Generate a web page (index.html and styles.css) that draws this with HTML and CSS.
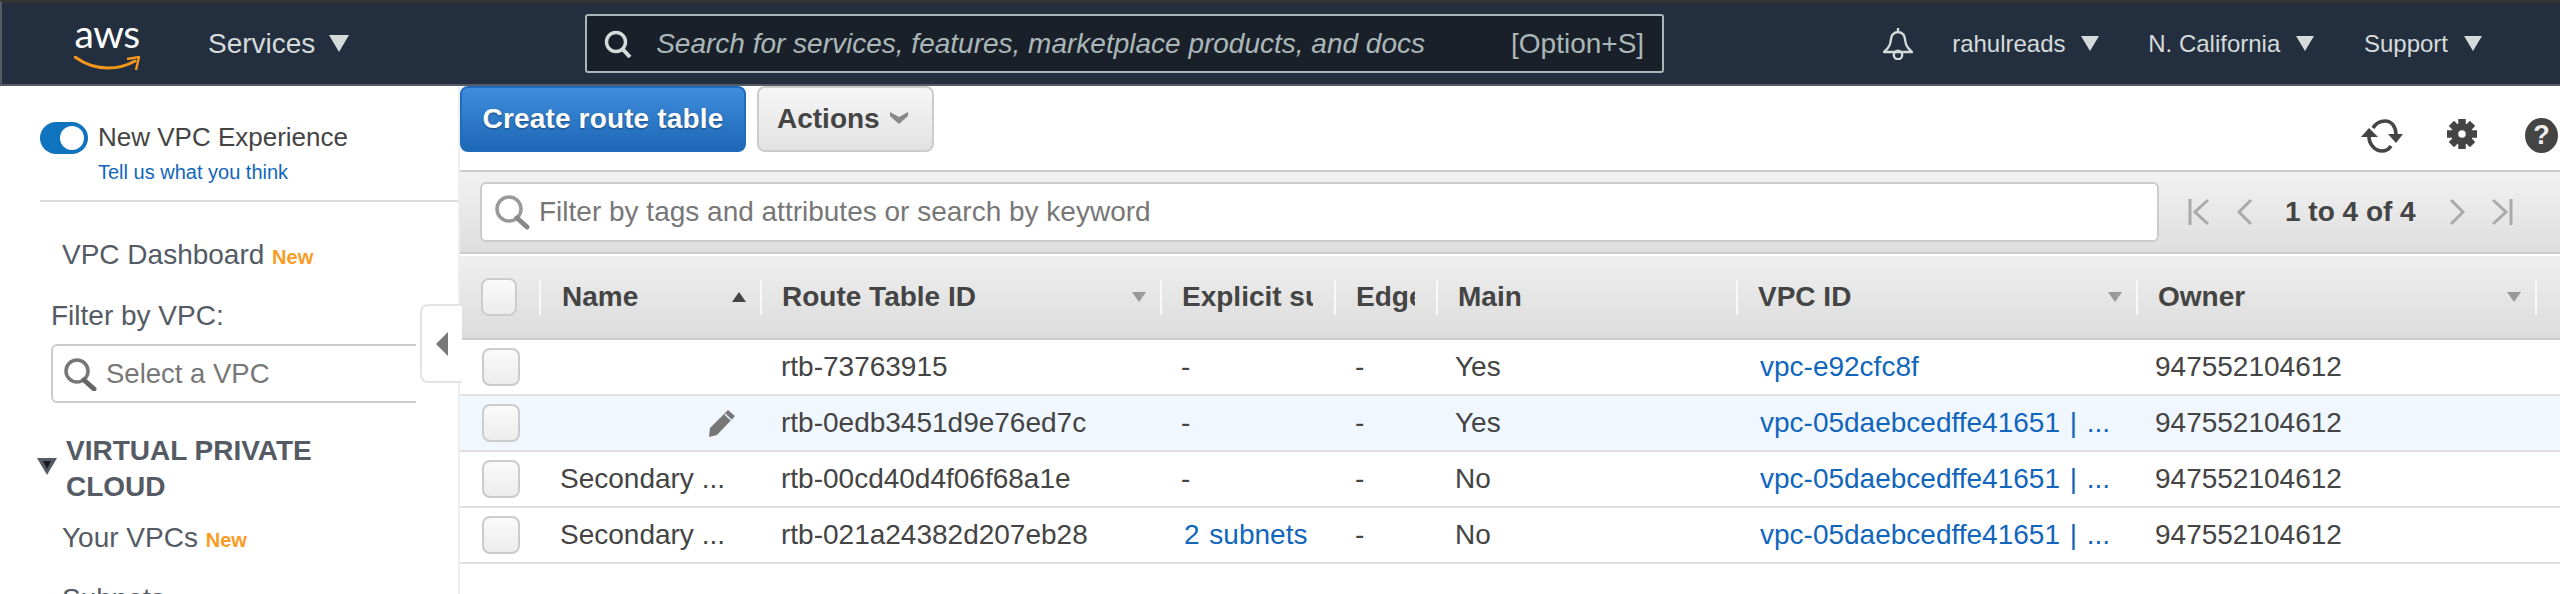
FILE: index.html
```html
<!DOCTYPE html>
<html lang="en">
<head>
    <meta charset="UTF-8">
    <title>Route Tables - VPC Console</title>
    <link rel="stylesheet" href="styles.css">
</head>
<body>
    <header class="navbar">
        <div class="logo">
            <span class="logo-text">aws</span>
            <svg class="logo-smile" viewBox="0 0 66 15" width="66" height="15">
                <path d="M1 1C12 9 24 12 34 12C44 12 54 9 61 5" fill="none" stroke="#f7981d" stroke-width="3" stroke-linecap="round"/>
                <path d="M53 3L65 1L62 14" fill="none" stroke="#f7981d" stroke-width="2.4"/>
            </svg>
        </div>
        <div class="nav-item services">Services <span class="caret"></span></div>
        <div class="nav-search">
            <svg class="nav-search-icon" viewBox="0 0 28 28" width="28" height="28">
                <circle cx="12" cy="12" r="9.5" fill="none" stroke="#d5dbdb" stroke-width="3.4"/>
                <path d="M18.5 19L26 27" stroke="#d5dbdb" stroke-width="4"/>
            </svg>
            <span class="nav-search-text">Search for services, features, marketplace products, and docs</span>
            <span class="nav-search-key">[Option+S]</span>
        </div>
        <div class="nav-right">
            <svg class="bell" viewBox="0 0 32 33" width="32" height="33">
                <path d="M16 1V5M16 5C10 5 9 10 8.500 15C8 20 5 22 2 25H30C27 22 24 20 23.500 15C23 10 22 5 16 5Z" fill="none" stroke="#d5dbdb" stroke-width="2.400" stroke-linejoin="round"/>
                <circle cx="16" cy="28" r="4.200" fill="none" stroke="#d5dbdb" stroke-width="2.400"/>
            </svg>
            <div class="nav-item small user">rahulreads <span class="caret"></span></div>
            <div class="nav-item small region">N. California <span class="caret"></span></div>
            <div class="nav-item small">Support <span class="caret"></span></div>
        </div>
    </header>

    <div class="layout">
        <aside class="sidebar">
            <div class="experience">
                <span class="toggle"></span>
                <div>
                    <div class="experience-title">New VPC Experience</div>
                    <a class="experience-link">Tell us what you think</a>
                </div>
            </div>
            <div class="side-link dashboard">VPC Dashboard <span class="new">New</span></div>
            <div class="filter-label">Filter by VPC:</div>
            <div class="vpc-select">
                <svg viewBox="0 0 34 34" width="34" height="34">
                    <circle cx="14" cy="14" r="11" fill="none" stroke="#777" stroke-width="3.500"/>
                    <path d="M21 23L31 32" stroke="#666" stroke-width="5" stroke-linecap="round"/>
                </svg>
                <span>Select a VPC</span>
            </div>
            <div class="side-group">
                <svg class="group-arrow" viewBox="0 0 20 17" width="20" height="17">
                    <path d="M0 0H20L10 17Z" fill="#545b64"/>
                    <path d="M6 3H14L10 11Z" fill="#16191f"/>
                </svg>
                <span>VIRTUAL PRIVATE<br>CLOUD</span>
            </div>
            <div class="side-link vpcs">Your VPCs <span class="new">New</span></div>
            <div class="side-link subnets">Subnets</div>
        </aside>

        <div class="collapse-handle"><span></span></div>

        <main class="main">
            <div class="toolbar">
                <button class="btn-create">Create route table</button>
                <button class="btn-actions">Actions
                    <svg viewBox="0 0 20 14" width="20" height="14">
                        <path d="M1 1L10 6L19 1V5L10 13L1 5Z" fill="#888"/>
                    </svg>
                </button>
                <div class="tools">
                    <svg class="tool-refresh" viewBox="0 0 42 34" width="42" height="34">
                        <path d="M12 9C15 4 20 2 24 2C31 2 35 8 35 16" fill="none" stroke="#444" stroke-width="3.600"/>
                        <path d="M27 15H42L35 24Z" fill="#444"/>
                        <path d="M8 18C8 25 14 32 21 32C25 32 28 30 30 27" fill="none" stroke="#444" stroke-width="3.600"/>
                        <path d="M0 18H17L8 9Z" fill="#444"/>
                    </svg>
                    <svg class="tool-gear" viewBox="-16 -16 32 32" width="30" height="32">
                        <g fill="#444">
                            <rect x="-4" y="-16" width="8" height="32"/>
                            <rect x="-4" y="-16" width="8" height="32" transform="rotate(45)"/>
                            <rect x="-4" y="-16" width="8" height="32" transform="rotate(90)"/>
                            <rect x="-4" y="-16" width="8" height="32" transform="rotate(135)"/>
                            <circle r="11.500"/>
                        </g>
                        <circle r="4" fill="white"/>
                    </svg>
                    <span class="tool-help">?</span>
                </div>
            </div>

            <div class="filter-bar">
                <div class="filter-input">
                    <svg viewBox="0 0 36 36" width="36" height="36">
                        <circle cx="15" cy="15" r="12" fill="none" stroke="#999" stroke-width="3.500"/>
                        <path d="M23 24L33 33" stroke="#888" stroke-width="5" stroke-linecap="round"/>
                    </svg>
                    <span>Filter by tags and attributes or search by keyword</span>
                </div>
                <div class="pager">
                    <svg class="pg-first" viewBox="0 0 22 28" width="22" height="28">
                        <path d="M2 1V27M20 2L7 14L20 26" fill="none" stroke="#aaa" stroke-width="3"/>
                    </svg>
                    <svg class="pg-prev" viewBox="0 0 17 28" width="17" height="28">
                        <path d="M15 2L3 14L15 26" fill="none" stroke="#aaa" stroke-width="3"/>
                    </svg>
                    <span class="pg-text">1 to 4 of 4</span>
                    <svg class="pg-next" viewBox="0 0 17 28" width="17" height="28">
                        <path d="M2 2L14 14L2 26" fill="none" stroke="#aaa" stroke-width="3"/>
                    </svg>
                    <svg class="pg-last" viewBox="0 0 22 28" width="22" height="28">
                        <path d="M20 1V27M2 2L15 14L2 26" fill="none" stroke="#aaa" stroke-width="3"/>
                    </svg>
                </div>
            </div>

            <table class="grid">
                <colgroup>
                    <col class="c-check"><col class="c-name"><col class="c-id"><col class="c-explicit"><col class="c-edge"><col class="c-main"><col class="c-vpc"><col class="c-owner"><col>
                </colgroup>
                <thead>
                    <tr>
                        <th><span class="check head-check"></span></th>
                        <th><div class="th name-head"><span class="th-label">Name</span><span class="sort up"></span></div></th>
                        <th><div class="th"><span class="th-label">Route Table ID</span><span class="sort"></span></div></th>
                        <th><div class="th clip"><span class="th-label">Explicit su</span></div></th>
                        <th><div class="th clip"><span class="th-label">Edge</span></div></th>
                        <th><div class="th"><span class="th-label">Main</span></div></th>
                        <th><div class="th"><span class="th-label">VPC ID</span><span class="sort"></span></div></th>
                        <th><div class="th"><span class="th-label">Owner</span><span class="sort"></span></div></th>
                        <th><div class="th"></div></th>
                    </tr>
                </thead>
                <tbody>
                    <tr>
                        <td><span class="check"></span></td>
                        <td></td>
                        <td>rtb-73763915</td>
                        <td>-</td>
                        <td>-</td>
                        <td class="tight">Yes</td>
                        <td><a>vpc-e92cfc8f</a></td>
                        <td class="tight">947552104612</td>
                        <td></td>
                    </tr>
                    <tr class="hover">
                        <td><span class="check"></span></td>
                        <td class="name-edit">
                            <svg viewBox="0 0 28 28" width="28" height="28">
                                <path fill="#777" d="M20 1L27 7L9 26L1 28L2 19Z"/>
                                <path d="M17 5L23 11" stroke="#eef5fd" stroke-width="1.500"/>
                            </svg>
                        </td>
                        <td>rtb-0edb3451d9e76ed7c</td>
                        <td>-</td>
                        <td>-</td>
                        <td class="tight">Yes</td>
                        <td><a>vpc-05daebcedffe41651 | ...</a></td>
                        <td class="tight">947552104612</td>
                        <td></td>
                    </tr>
                    <tr>
                        <td><span class="check"></span></td>
                        <td>Secondary ...</td>
                        <td>rtb-00cd40d4f06f68a1e</td>
                        <td>-</td>
                        <td>-</td>
                        <td class="tight">No</td>
                        <td><a>vpc-05daebcedffe41651 | ...</a></td>
                        <td class="tight">947552104612</td>
                        <td></td>
                    </tr>
                    <tr>
                        <td><span class="check"></span></td>
                        <td>Secondary ...</td>
                        <td>rtb-021a24382d207eb28</td>
                        <td><a>2 subnets</a></td>
                        <td>-</td>
                        <td class="tight">No</td>
                        <td><a>vpc-05daebcedffe41651 | ...</a></td>
                        <td class="tight">947552104612</td>
                        <td></td>
                    </tr>
                </tbody>
            </table>
        </main>
    </div>
</body>
</html>
```

FILE: styles.css
```css
* {
    box-sizing: border-box;
}
html, body {
    margin: 0;
    height: 594px;
    overflow: hidden;
}
body {
    font-family: "Liberation Sans", Arial, sans-serif;
    font-size: 28px;
    color: #444;
    background: white;
}

/* top nav */
.navbar {
    display: flex;
    align-items: center;
    height: 86px;
    background: #232f3e;
    border-top: 3px solid #333;
    border-bottom: 2px solid #545b64;
    border-left: 2px solid #545b64;
    color: #d5dbdb;
}
.logo {
    width: 66px;
    height: 62px;
    margin-left: 72px;
    display: flex;
    flex-direction: column;
    align-items: center;
}
.logo-text {
    font-family: Lato, sans-serif;
    font-size: 39px;
    line-height: 40px;
    height: 43px;
    color: white;
    letter-spacing: -0.5px;
}
.logo-smile {
    display: block;
}
.nav-item {
    display: flex;
    align-items: center;
    white-space: pre;
}
.nav-item.small {
    font-size: 24px;
}
.services {
    margin-left: 68px;
}
.caret {
    width: 0;
    height: 0;
    margin-left: 6px;
    border-left: 10px solid transparent;
    border-right: 10px solid transparent;
    border-top: 17px solid #d5dbdb;
}
.small .caret {
    margin-left: 9px;
    border-left-width: 9px;
    border-right-width: 9px;
    border-top-width: 15px;
}
.nav-search {
    display: flex;
    align-items: center;
    width: 1079px;
    height: 59px;
    margin-left: 236px;
    padding: 0 18px 0 17px;
    background: #1a2029;
    border: 2px solid #aab7b8;
    border-radius: 3px;
}
.nav-search-text {
    margin-left: 24px;
    font-style: italic;
    color: #aab7b8;
}
.nav-search-key {
    margin-left: auto;
    color: #aab7b8;
}
.nav-right {
    display: flex;
    align-items: center;
    margin-left: 218px;
}
.user {
    margin-left: 38px;
}
.region {
    margin-left: 49px;
    margin-right: 50px;
}

/* page */
.layout {
    position: relative;
    display: flex;
    height: 508px;
    overflow: hidden;
}
.sidebar {
    width: 460px;
    flex: none;
    border-right: 2px solid #eee;
    color: #545b64;
}
.experience {
    display: flex;
    align-items: flex-start;
    gap: 10px;
    margin: 32px 0 0 40px;
    height: 84px;
    border-bottom: 2px solid #ddd;
}
.toggle {
    width: 48px;
    height: 32px;
    margin-top: 4px;
    background: #0f74bd;
    border-radius: 16px;
    display: flex;
    justify-content: flex-end;
    align-items: center;
    padding-right: 4px;
}
.toggle::after {
    content: "";
    width: 24px;
    height: 24px;
    background: white;
    border-radius: 50%;
}
.experience-title {
    font-size: 26px;
    line-height: 38px;
    color: #444;
}
.experience-link, a {
    color: #1166bb;
}
.experience-link {
    display: block;
    font-size: 20px;
    line-height: 24px;
    margin-top: 4px;
}
.side-link {
    margin-left: 62px;
    line-height: 32px;
}
.new {
    font-size: 20px;
    font-weight: bold;
    color: #f89c24;
}
.dashboard {
    margin-top: 37px;
}
.filter-label {
    margin: 27px 0 0 51px;
    line-height: 32px;
}
.vpc-select {
    display: flex;
    align-items: center;
    gap: 9px;
    width: 365px;
    height: 59px;
    margin: 12px 0 0 51px;
    padding-left: 10px;
    font-size: 27.5px;
    color: #777;
    border: 2px solid #ccc;
    border-right: none;
    border-radius: 6px 0 0 6px;
}
.side-group {
    display: flex;
    align-items: center;
    gap: 9px;
    margin: 30px 0 0 37px;
    font-weight: bold;
    line-height: 36px;
}
.group-arrow {
    flex: none;
    margin-bottom: 6px;
}
.vpcs {
    margin-top: 17px;
}
.subnets {
    margin-top: 27px;
}
.collapse-handle {
    position: absolute;
    left: 420px;
    top: 218px;
    width: 42px;
    height: 79px;
    display: flex;
    align-items: center;
    padding-left: 14px;
    background: white;
    border: 2px solid #e4e4e4;
    border-right: none;
    border-radius: 8px 0 0 8px;
}
.collapse-handle span {
    border-top: 12px solid transparent;
    border-bottom: 12px solid transparent;
    border-right: 12px solid #777;
}

/* main panel */
.main {
    flex: 1;
    min-width: 0;
}
.toolbar {
    display: flex;
    align-items: flex-start;
    height: 84px;
}
button {
    font-family: inherit;
    font-size: 28px;
    font-weight: bold;
    border-radius: 8px;
    height: 66px;
}
.btn-create {
    width: 286px;
    color: white;
    background: linear-gradient(#3f8ddb, #1e68b6);
    border: 2px solid #1f6cbd;
    text-shadow: 0 1px 2px rgba(0,0,0,0.4);
    letter-spacing: 0.15px;
    padding: 0;
}
.btn-actions {
    display: flex;
    align-items: center;
    gap: 9px;
    width: 177px;
    height: 66px;
    margin-left: 11px;
    padding: 0 0 0 18px;
    color: #444;
    background: linear-gradient(#f6f6f6, #e2e2e2);
    border: 2px solid #ccc;
}
.btn-actions svg {
    margin-bottom: 3px;
}
.tools {
    display: flex;
    align-items: flex-start;
    margin-left: auto;
    margin-top: 32px;
    padding-right: 2px;
}
.tool-refresh {
    margin-top: 1px;
}
.tool-gear {
    margin-left: 44px;
}
.tool-help {
    width: 33px;
    height: 35px;
    margin-left: 48px;
    border-radius: 50%;
    background: #444;
    color: #eee;
    font-weight: bold;
    font-size: 27px;
    line-height: 35px;
    text-align: center;
}

.filter-bar {
    display: flex;
    align-items: center;
    height: 84px;
    padding-left: 20px;
    background: linear-gradient(#f2f2f2, #dedede);
    border-top: 2px solid #ccc;
    border-bottom: 2px solid #ccc;
}
.filter-input {
    display: flex;
    align-items: center;
    gap: 9px;
    width: 1679px;
    height: 60px;
    padding-left: 12px;
    color: #777;
    background: white;
    border: 2px solid #ccc;
    border-radius: 6px;
}
.pager {
    display: flex;
    align-items: center;
    margin-left: 29px;
}
.pg-prev {
    margin-left: 26px;
}
.pg-text {
    margin-left: 32px;
    font-weight: bold;
    color: #444;
}
.pg-next {
    margin-left: 33px;
}
.pg-last {
    margin-left: 25px;
}

/* table */
.grid {
    width: 2100px;
    table-layout: fixed;
    border-collapse: separate;
    border-spacing: 0;
    margin-top: 2px;
}
.c-check { width: 79px; }
.c-name { width: 221px; }
.c-id { width: 400px; }
.c-explicit { width: 174px; }
.c-edge { width: 102px; }
.c-main { width: 300px; }
.c-vpc { width: 400px; }
.c-owner { width: 399px; }

th {
    height: 84px;
    padding: 0;
    text-align: left;
    background: linear-gradient(#efefef, #dcdcdc);
    border-bottom: 2px solid #ccc;
}
.th {
    display: flex;
    align-items: center;
    height: 35px;
    padding: 0 14px 0 20px;
    border-left: 2px solid #f8f8f8;
}
.th.name-head {
    padding-left: 21px;
}
.th.clip {
    padding-right: 21px;
}
.th-label {
    flex: 1;
    overflow: hidden;
    white-space: nowrap;
}
.sort {
    flex: none;
    margin-left: 4px;
    border-left: 7px solid transparent;
    border-right: 7px solid transparent;
    border-top: 10px solid #999;
}
.sort.up {
    border-top: none;
    border-bottom: 10px solid #444;
}
td {
    height: 56px;
    padding: 0 0 0 21px;
    white-space: nowrap;
    overflow: hidden;
    border-bottom: 2px solid #e0e0e0;
}
td.tight {
    padding-left: 19px;
}
td a {
    margin-left: 3px;
    word-spacing: 2px;
}
.hover td {
    background: #f1f7fe;
}
td:first-child, th:first-child {
    padding-left: 22px;
}
.check {
    display: block;
    width: 38px;
    height: 38px;
    background: linear-gradient(#fafafa, #ececec);
    border: 2px solid #ccc;
    border-radius: 8px;
}
.head-check {
    margin-left: -1px;
    width: 36px;
}
td.name-edit {
    text-align: right;
    padding-right: 24px;
}
.name-edit svg {
    display: block;
    margin-left: auto;
}
```
